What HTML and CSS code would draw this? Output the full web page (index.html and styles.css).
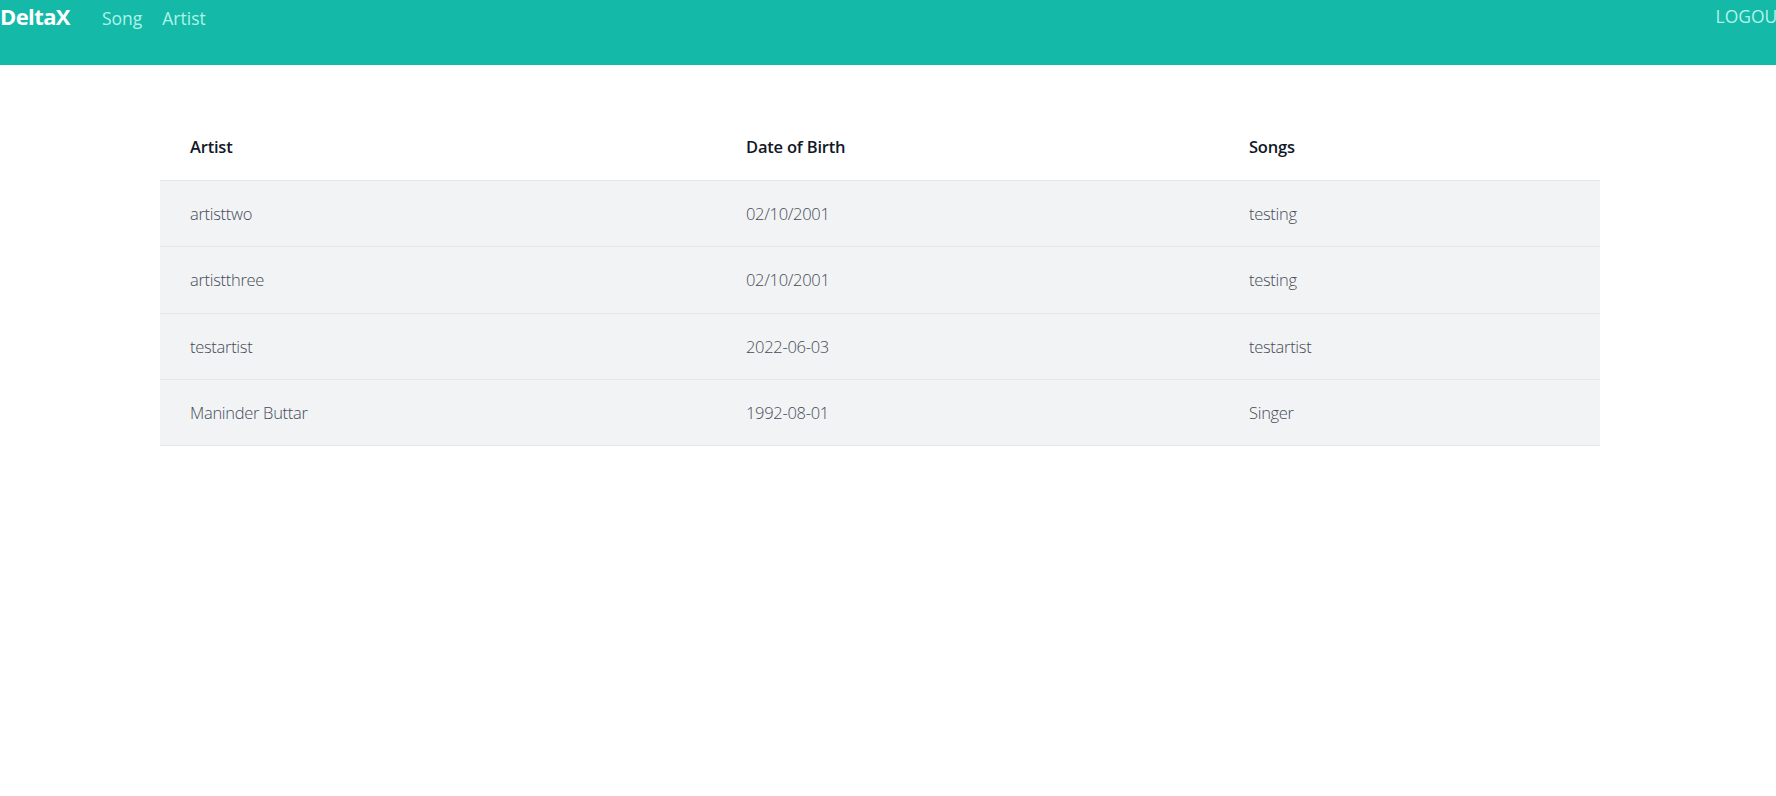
FILE: index.html
```html
<!DOCTYPE html>
<html>
<head>
<meta charset="utf-8">
<link rel="stylesheet" href="styles.css">
</head>
<body>
<nav class="navbar">
  <div class="nav-left">
    <a class="brand">DeltaX</a>
    <a class="nav-link">Song</a>
    <a class="nav-link">Artist</a>
  </div>
  <a class="nav-link logout">LOGOUT</a>
</nav>
<main class="content">
  <table class="table">
    <thead>
      <tr>
        <th class="c1">Artist</th>
        <th class="c2">Date of Birth</th>
        <th class="c3">Songs</th>
      </tr>
    </thead>
    <tbody>
      <tr><td>artisttwo</td><td>02/10/2001</td><td>testing</td></tr>
      <tr><td>artistthree</td><td>02/10/2001</td><td>testing</td></tr>
      <tr><td>testartist</td><td>2022-06-03</td><td>testartist</td></tr>
      <tr><td>Maninder Buttar</td><td>1992-08-01</td><td>Singer</td></tr>
    </tbody>
  </table>
</main>
</body>
</html>
```
FILE: styles.css
```css
html, body {
  margin: 0;
  padding: 0;
  background: #ffffff;
  font-family: "Open Sans", "Noto Sans", sans-serif;
  overflow: hidden;
}
.navbar {
  height: 65px;
  background: #14b9a7;
  display: flex;
  justify-content: space-between;
  align-items: flex-start;
  white-space: nowrap;
}
.nav-left {
  display: flex;
  align-items: baseline;
}
.brand {
  color: #ffffff;
  font-weight: 700;
  font-size: 22px;
  letter-spacing: -0.6px;
  line-height: 32px;
  margin-right: 32px;
}
.nav-link {
  color: #b0f4ea;
  font-size: 17.5px;
  line-height: 32px;
  margin-right: 20px;
  font-weight: 400;
}
.logout {
  margin-right: -11px;
}
.content {
  padding: 48px 0 0 160px;
}
.table {
  width: 1440px;
  border-collapse: collapse;
  table-layout: fixed;
}
.table th {
  text-align: left;
  font-weight: 600;
  font-size: 16.5px;
  color: #111827;
  height: 67px;
  padding: 0 0 0 30px;
  border-bottom: 1px solid #e5e7eb;
  letter-spacing: -0.2px;
}
.c1 { width: 526px; }
.c2 { width: 473px; }
.table td {
  background: #f2f3f5;
  height: 65.3px;
  padding: 0 0 0 30px;
  font-size: 16.5px;
  font-weight: 300;
  color: #444b55;
  border-bottom: 1px solid #e5e7eb;
  letter-spacing: -0.3px;
}
```
